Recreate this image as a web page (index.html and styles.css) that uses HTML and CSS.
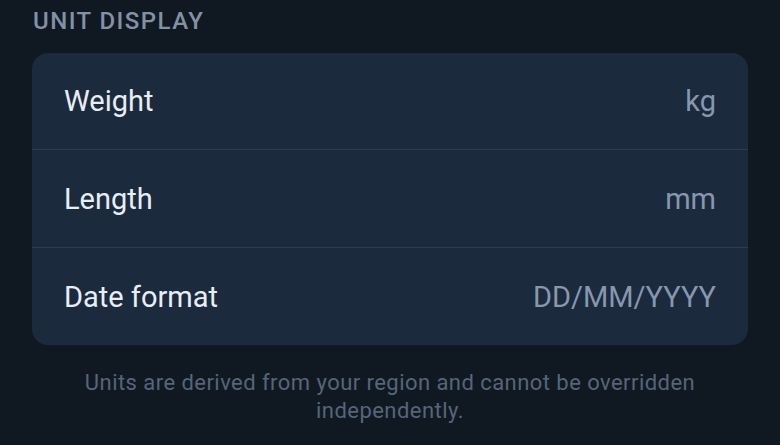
FILE: index.html
```html
<!DOCTYPE html>
<html lang="en">
<head>
<meta charset="utf-8">
<title>Unit display</title>
<link rel="stylesheet" href="styles.css">
</head>
<body>
<main class="page">
  <h2 class="section-title">UNIT DISPLAY</h2>
  <section class="card">
    <div class="row">
      <span class="label">Weight</span>
      <span class="value">kg</span>
    </div>
    <div class="row">
      <span class="label">Length</span>
      <span class="value">mm</span>
    </div>
    <div class="row">
      <span class="label">Date format</span>
      <span class="value">DD/MM/YYYY</span>
    </div>
  </section>
  <p class="note">Units are derived from your region and cannot be overridden independently.</p>
</main>
</body>
</html>
```
FILE: styles.css
```css
html, body {
  margin: 0;
  padding: 0;
  background: #101922;
  height: 100%;
}
body {
  font-family: Roboto, "Liberation Sans", sans-serif;
  overflow: hidden;
}
.page {
  padding: 5px 32px 0;
  display: flex;
  flex-direction: column;
}
.section-title {
  margin: 0 0 0 1px;
  font-size: 24px;
  line-height: 32px;
  font-weight: 500;
  letter-spacing: 1.45px;
  color: #8391a6;
}
.card {
  margin-top: 16px;
  background: #1b2a3d;
  border-radius: 16px;
  display: flex;
  flex-direction: column;
}
.row {
  height: 97px;
  padding: 0 32px;
  display: flex;
  align-items: center;
  justify-content: space-between;
  border-top: 1px solid #2d3d51;
}
.row:first-child {
  border-top: none;
  height: 96px;
}
.label {
  font-size: 29px;
  color: #e8eef5;
}
.value {
  font-size: 29px;
  color: #8797ad;
}
.note {
  margin: 24px 40px 0;
  text-align: center;
  font-size: 22px;
  line-height: 28px;
  letter-spacing: 0.45px;
  color: #56657a;
}
```
